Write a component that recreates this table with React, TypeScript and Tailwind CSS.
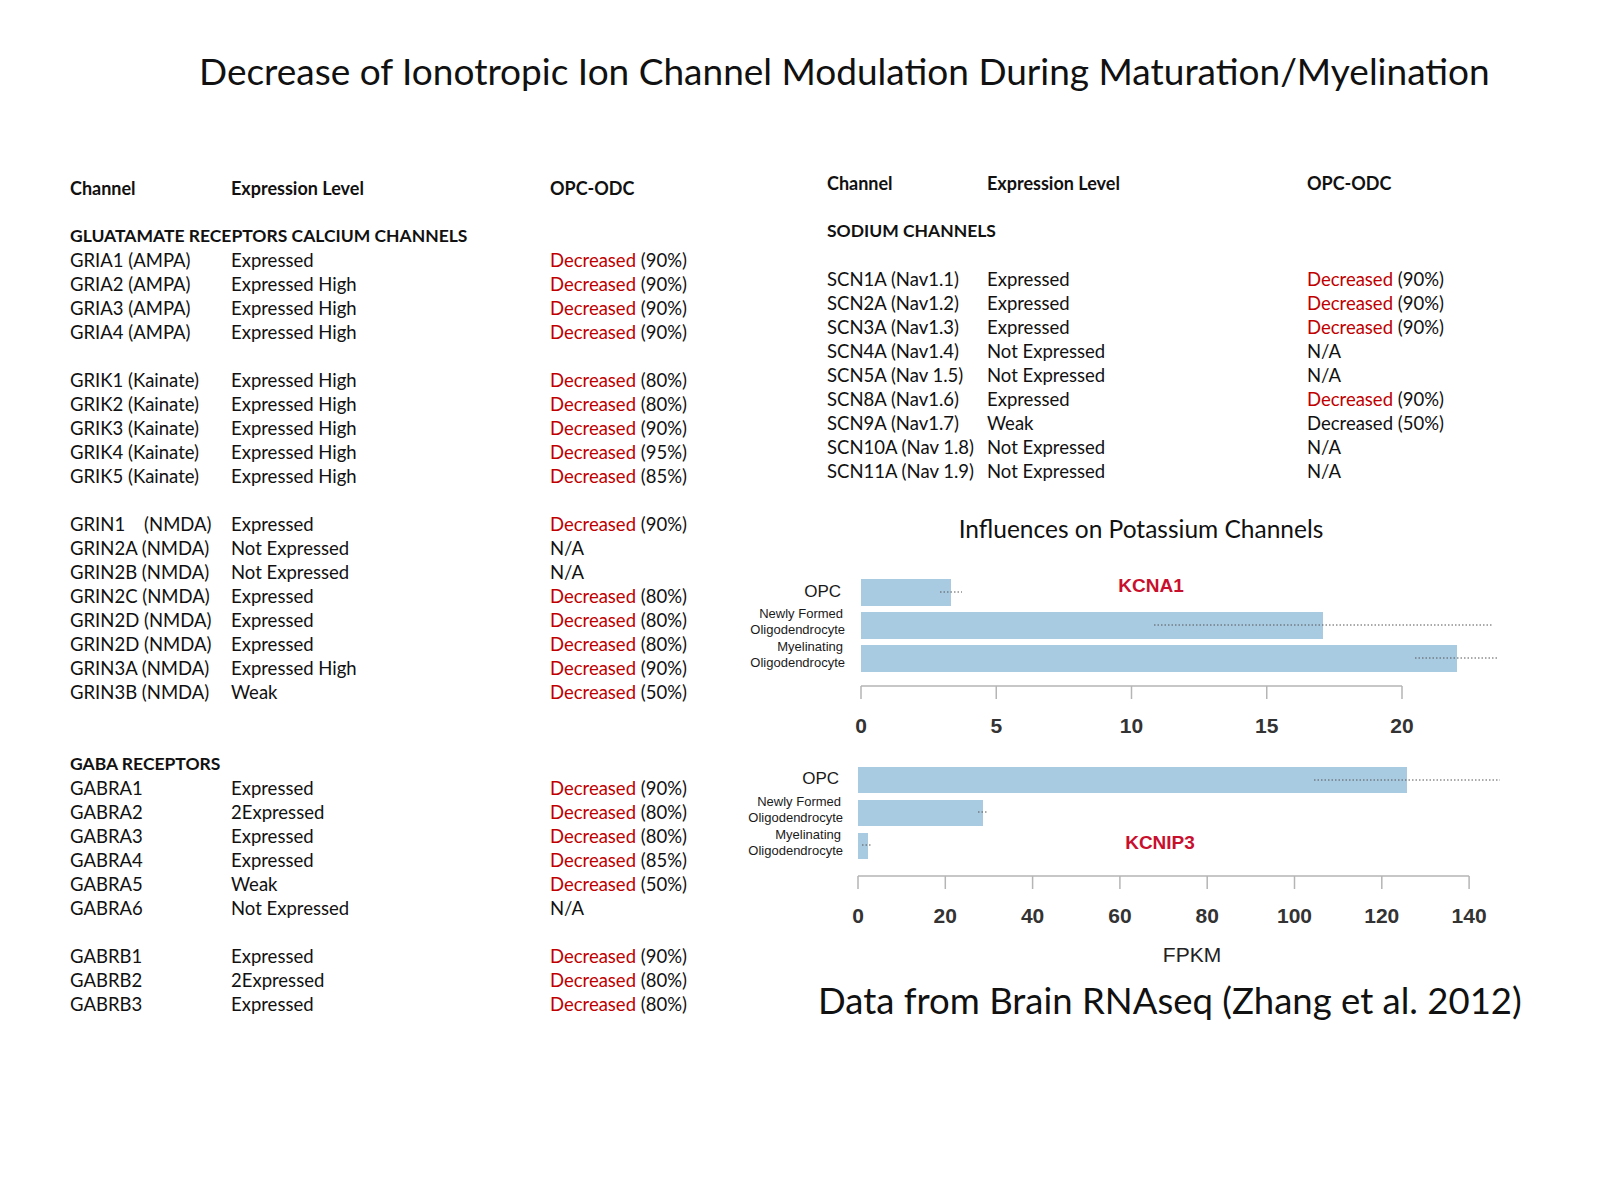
type Res = { pct?: string; red?: boolean };
type Item =
  | { kind: "row"; ch: string; ex: string; res: Res }
  | { kind: "head"; text: string }
  | { kind: "gap" };

const row = (ch: string, ex: string, pct?: string, red = true): Item => ({
  kind: "row",
  ch,
  ex,
  res: { pct, red },
});
const gap: Item = { kind: "gap" };
const head = (text: string): Item => ({ kind: "head", text });

const LEFT: Item[] = [
  head("GLUATAMATE RECEPTORS CALCIUM CHANNELS"),
  row("GRIA1 (AMPA)", "Expressed", "90"),
  row("GRIA2 (AMPA)", "Expressed High", "90"),
  row("GRIA3 (AMPA)", "Expressed High", "90"),
  row("GRIA4 (AMPA)", "Expressed High", "90"),
  gap,
  row("GRIK1 (Kainate)", "Expressed High", "80"),
  row("GRIK2 (Kainate)", "Expressed High", "80"),
  row("GRIK3 (Kainate)", "Expressed High", "90"),
  row("GRIK4 (Kainate)", "Expressed High", "95"),
  row("GRIK5 (Kainate)", "Expressed High", "85"),
  gap,
  row("GRIN1    (NMDA)", "Expressed", "90"),
  row("GRIN2A (NMDA)", "Not Expressed"),
  row("GRIN2B (NMDA)", "Not Expressed"),
  row("GRIN2C (NMDA)", "Expressed", "80"),
  row("GRIN2D (NMDA)", "Expressed", "80"),
  row("GRIN2D (NMDA)", "Expressed", "80"),
  row("GRIN3A (NMDA)", "Expressed High", "90"),
  row("GRIN3B (NMDA)", "Weak", "50"),
  gap,
  gap,
  head("GABA RECEPTORS"),
  row("GABRA1", "Expressed", "90"),
  row("GABRA2", "2Expressed", "80"),
  row("GABRA3", "Expressed", "80"),
  row("GABRA4", "Expressed", "85"),
  row("GABRA5", "Weak", "50"),
  row("GABRA6", "Not Expressed"),
  gap,
  row("GABRB1", "Expressed", "90"),
  row("GABRB2", "2Expressed", "80"),
  row("GABRB3", "Expressed", "80"),
];

const RIGHT: Item[] = [
  head("SODIUM CHANNELS"),
  gap,
  row("SCN1A (Nav1.1)", "Expressed", "90"),
  row("SCN2A (Nav1.2)", "Expressed", "90"),
  row("SCN3A (Nav1.3)", "Expressed", "90"),
  row("SCN4A (Nav1.4)", "Not Expressed"),
  row("SCN5A (Nav 1.5)", "Not Expressed"),
  row("SCN8A (Nav1.6)", "Expressed", "90"),
  row("SCN9A (Nav1.7)", "Weak", "50", false),
  row("SCN10A (Nav 1.8)", "Not Expressed"),
  row("SCN11A (Nav 1.9)", "Not Expressed"),
];

function Result({ res }: { res: Res }) {
  if (!res.pct) return <span>N/A</span>;
  return (
    <span>
      <span className={res.red ? "text-[#c00000]" : ""}>Decreased</span> ({res.pct}%)
    </span>
  );
}

function ChannelTable({ items, cols }: { items: Item[]; cols: string }) {
  return (
    <div className="text-[18.5px] leading-[24px]">
      <div className={`grid ${cols} font-bold text-[18px]`}>
        <span>Channel</span>
        <span>Expression Level</span>
        <span>OPC-ODC</span>
      </div>
      <div className="h-[24px]" />
      {items.map((it, i) => {
        if (it.kind === "gap") return <div key={i} className="h-[24px]" />;
        if (it.kind === "head")
          return (
            <div key={i} className="font-bold text-[17.5px] whitespace-nowrap">
              {it.text}
            </div>
          );
        return (
          <div key={i} className={`grid ${cols}`}>
            <span className="whitespace-pre">{it.ch}</span>
            <span>{it.ex}</span>
            <Result res={it.res} />
          </div>
        );
      })}
    </div>
  );
}

const BAR = "#a9cbe2";
const LABEL_FONT = "'Liberation Sans Narrow', 'Liberation Sans', Arial, sans-serif";

function CellLabels({ x, ys }: { x: number; ys: [number, number, number, number, number] }) {
  return (
    <g fontFamily={LABEL_FONT} fill="#1a1a1a" textAnchor="end" dominantBaseline="central">
      <text x={x - 4} y={ys[0]} fontSize={17}>OPC</text>
      <text x={x - 2} y={ys[1]} fontSize={13}>Newly Formed</text>
      <text x={x} y={ys[2]} fontSize={13}>Oligodendrocyte</text>
      <text x={x - 2} y={ys[3]} fontSize={13}>Myelinating</text>
      <text x={x} y={ys[4]} fontSize={13}>Oligodendrocyte</text>
    </g>
  );
}

function Dots({ y, x1, x2 }: { y: number; x1: number; x2: number }) {
  return <line x1={x1} x2={x2} y1={y} y2={y} stroke="#555" strokeWidth={1} strokeDasharray="1.5 2" />;
}

function Axis({ x0, step, n, y, labels }: { x0: number; step: number; n: number; y: number; labels: string[] }) {
  const xs = Array.from({ length: n }, (_, i) => x0 + i * step);
  return (
    <g>
      <line x1={x0} x2={xs[n - 1]} y1={y} y2={y} stroke="#b5b5b5" strokeWidth={1.5} />
      {xs.map((x, i) => (
        <line key={i} x1={x} x2={x} y1={y} y2={y + 13} stroke="#b5b5b5" strokeWidth={1.5} />
      ))}
      {xs.map((x, i) => (
        <text
          key={"t" + i}
          x={x}
          y={y + 39}
          textAnchor="middle"
          dominantBaseline="central"
          fontFamily={LABEL_FONT}
          fontWeight={700}
          fontSize={21}
          fill="#333"
        >
          {labels[i]}
        </text>
      ))}
    </g>
  );
}

function PotassiumCharts() {
  return (
    <svg width={800} height={430} viewBox="730 548 800 430" className="block">
      {/* KCNA1 */}
      <rect x={861} y={579} width={90} height={27} fill={BAR} />
      <rect x={861} y={612} width={462} height={27} fill={BAR} />
      <rect x={861} y={645} width={596} height={27} fill={BAR} />
      <Dots y={592} x1={940} x2={962} />
      <Dots y={625} x1={1154} x2={1493} />
      <Dots y={658} x1={1415} x2={1498} />
      <text x={1151} y={585} textAnchor="middle" dominantBaseline="central" fontFamily={LABEL_FONT} fontWeight={700} fontSize={19} fill="#c8102e">
        KCNA1
      </text>
      <CellLabels x={845} ys={[591, 613, 629, 646, 662]} />
      <Axis x0={861} step={135.25} n={5} y={686} labels={["0", "5", "10", "15", "20"]} />

      {/* KCNIP3 */}
      <rect x={858} y={767} width={549} height={26} fill={BAR} />
      <rect x={858} y={800} width={125} height={26} fill={BAR} />
      <rect x={858} y={833} width={10} height={26} fill={BAR} />
      <Dots y={780} x1={1314} x2={1500} />
      <Dots y={812} x1={978} x2={988} />
      <Dots y={845} x1={862} x2={872} />
      <text x={1160} y={842} textAnchor="middle" dominantBaseline="central" fontFamily={LABEL_FONT} fontWeight={700} fontSize={19} fill="#c8102e">
        KCNIP3
      </text>
      <CellLabels x={843} ys={[778, 801, 817, 834, 850]} />
      <Axis x0={858} step={87.3} n={8} y={876} labels={["0", "20", "40", "60", "80", "100", "120", "140"]} />
      <text x={1192} y={954} textAnchor="middle" dominantBaseline="central" fontFamily={LABEL_FONT} fontSize={21} fill="#222">
        FPKM
      </text>
    </svg>
  );
}

export default function App() {
  return (
    <div className="w-[1600px] h-[1200px] bg-white text-[#111] font-['Lato',sans-serif] overflow-hidden">
      <h1 className="pt-[48px] pl-[199px] text-[37px] leading-[46px] whitespace-nowrap">
        Decrease of Ionotropic Ion Channel Modulation During Maturation/Myelination
      </h1>

      <div className="flex mt-[77px]">
        <div className="w-[730px] pl-[70px] pt-[5px]">
          <ChannelTable items={LEFT} cols="grid-cols-[161px_319px_1fr]" />
        </div>

        <div className="w-[800px]">
          <div className="pl-[97px]">
            <ChannelTable items={RIGHT} cols="grid-cols-[160px_320px_1fr]" />
          </div>
          <div className="mt-[31px] pl-[22px] text-center text-[24.5px] leading-[30px]">
            Influences on Potassium Channels
          </div>
          <div className="mt-[4px]">
            <PotassiumCharts />
          </div>
          <div className="pl-[88px] text-[36.5px] leading-[44px] whitespace-nowrap">
            Data from Brain RNAseq (Zhang et al. 2012)
          </div>
        </div>
      </div>
    </div>
  );
}
